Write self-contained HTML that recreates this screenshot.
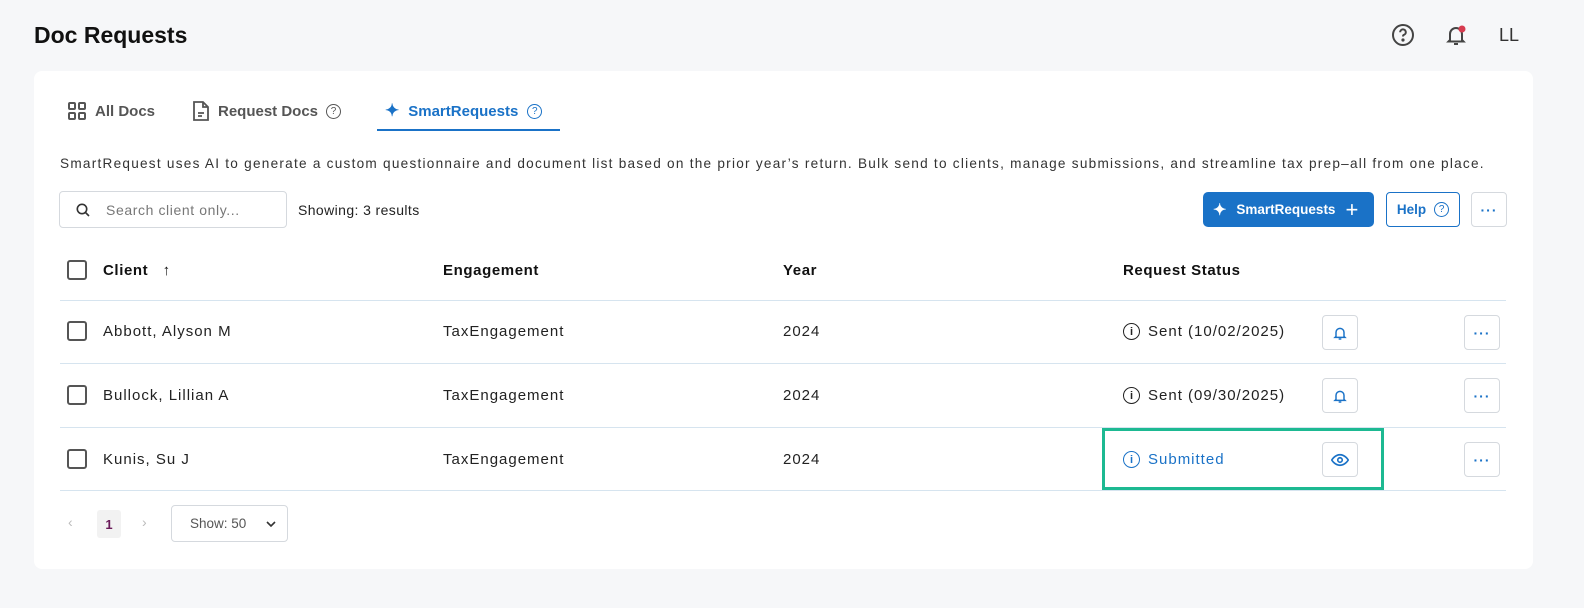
<!DOCTYPE html>
<html><head><style>
*{box-sizing:border-box;margin:0;padding:0}
body{width:1584px;height:608px;background:#f6f7f9;font-family:"Liberation Sans",sans-serif;color:#1f2328;position:relative;overflow:hidden}
.a{position:absolute}
.title{left:34px;top:22px;font-size:23px;font-weight:bold;color:#111}
.card{left:34px;top:71px;width:1499px;height:498px;background:#fff;border-radius:8px}
.tab{top:101px;font-size:15px;font-weight:bold;color:#555;display:flex;align-items:center;gap:8px}
.btn{border:1px solid #d5d9de;border-radius:4px;background:#fff;display:flex;align-items:center;justify-content:center}
.line{left:60px;width:1446px;height:1px;background:#d6e4ef}
.cb{width:20px;height:20px;border:2px solid #555;border-radius:3px;left:67px}
.t{font-size:15px;color:#222;letter-spacing:1px}
.h{font-size:15px;font-weight:bold;color:#111;letter-spacing:.6px}
.dots{color:#1a72c7;font-weight:bold;font-size:14px;letter-spacing:1px}
</style></head><body>
<div class="a title">Doc Requests</div>
<svg class="a" style="left:1391px;top:23px" width="24" height="24" viewBox="0 0 24 24" fill="none" stroke="#444" stroke-width="2"><circle cx="12" cy="12" r="10"/><path d="M9.2 9.2a2.8 2.8 0 1 1 3.6 2.7c-.6.3-.8.8-.8 1.6"/><circle cx="12" cy="17" r=".6" fill="#444"/></svg>
<svg class="a" style="left:1444px;top:23px" width="24" height="24" viewBox="0 0 24 24" fill="none" stroke="#444" stroke-width="2"><path d="M6 17V11a6 6 0 0 1 12 0v6l1.5 1.5h-15z"/><path d="M10 21h4"/><circle cx="18" cy="6" r="3.5" fill="#d63b4f" stroke="none"/></svg>
<div class="a" style="left:1499px;top:25px;font-size:18px;color:#333">LL</div>
<div class="a card"></div>
<div class="a tab" style="left:67px"><svg width="20" height="20" viewBox="0 0 20 20" fill="none" stroke="#555" stroke-width="2"><rect x="2" y="2" width="6" height="6" rx="1"/><rect x="12" y="2" width="6" height="6" rx="1"/><rect x="2" y="12" width="6" height="6" rx="1"/><rect x="12" y="12" width="6" height="6" rx="1"/></svg>All Docs</div>
<div class="a tab" style="left:192px"><svg width="18" height="20" viewBox="0 0 18 20" fill="none" stroke="#555" stroke-width="1.8"><path d="M2 1h9l5 5v13H2z"/><path d="M11 1v5h5M6 12h6M6 15h4"/></svg>Request Docs <span style="font-weight:normal;border:1.5px solid #555;border-radius:50%;width:15px;height:15px;font-size:10px;display:inline-flex;align-items:center;justify-content:center">?</span></div>
<div class="a tab" style="left:385px;color:#1a72c7;gap:9px"><span style="font-size:17px">✦</span>SmartRequests <span style="font-weight:normal;border:1.5px solid #1a72c7;border-radius:50%;width:15px;height:15px;font-size:10px;display:inline-flex;align-items:center;justify-content:center">?</span></div>
<div class="a" style="left:377px;top:129px;width:183px;height:2px;background:#1a72c7"></div>
<div class="a" style="left:60px;top:156px;font-size:13.6px;color:#333;letter-spacing:1.25px;white-space:nowrap">SmartRequest uses AI to generate a custom questionnaire and document list based on the prior year’s return. Bulk send to clients, manage submissions, and streamline tax prep–all from one place.</div>
<div class="a btn" style="left:59px;top:191px;width:228px;height:37px;justify-content:flex-start;padding-left:16px;gap:16px;font-size:14px;color:#777;letter-spacing:.6px"><svg width="14" height="14" viewBox="0 0 14 14" fill="none" stroke="#333" stroke-width="1.6"><circle cx="6" cy="6" r="4.7"/><path d="M9.5 9.5l3.5 3.5"/></svg>Search client only...</div>
<div class="a" style="left:298px;top:202px;font-size:14px;color:#222;letter-spacing:.4px">Showing: 3 results</div>
<div class="a" style="left:1203px;top:192px;width:171px;height:35px;background:#1a72c7;border-radius:5px;color:#fff;font-weight:bold;font-size:13.5px;display:flex;align-items:center;padding-left:10px;gap:10px"><span style="font-size:16px">✦</span>SmartRequests <span style="font-size:22px;font-weight:normal">+</span></div>
<div class="a btn" style="left:1386px;top:192px;width:74px;height:35px;border-color:#1a72c7;color:#1a72c7;font-weight:bold;font-size:13.5px;gap:8px">Help <span style="font-weight:normal;border:1.5px solid #1a72c7;border-radius:50%;width:15px;height:15px;font-size:10px;display:inline-flex;align-items:center;justify-content:center">?</span></div>
<div class="a btn dots" style="left:1471px;top:192px;width:36px;height:35px">···</div>
<div class="a cb" style="top:260px"></div>
<div class="a h" style="left:103px;top:262px">Client &nbsp; ↑</div>
<div class="a h" style="left:443px;top:262px">Engagement</div>
<div class="a h" style="left:783px;top:262px">Year</div>
<div class="a h" style="left:1123px;top:262px">Request Status</div>
<div class="a line" style="top:300px"></div>
<div class="a line" style="top:363px"></div>
<div class="a line" style="top:427px"></div>
<div class="a line" style="top:490px"></div>

<div class="a cb" style="top:321px"></div><div class="a t" style="left:103px;top:323px">Abbott, Alyson M</div><div class="a t" style="left:443px;top:323px">TaxEngagement</div><div class="a t" style="left:783px;top:323px">2024</div>
<div class="a t" style="left:1123px;top:323px;display:flex;gap:8px;align-items:center"><span style="border:1.6px solid #222;border-radius:50%;width:17px;height:17px;font-size:11px;font-weight:bold;display:inline-flex;align-items:center;justify-content:center;letter-spacing:0">i</span>Sent (10/02/2025)</div>
<div class="a btn" style="left:1322px;top:315px;width:36px;height:35px"><svg width="16" height="16" viewBox="0 0 24 24" fill="none" stroke="#1a72c7" stroke-width="2.2"><path d="M6 17V11a6 6 0 0 1 12 0v6l1.5 1.5h-15z"/><path d="M10 21h4"/></svg></div>
<div class="a btn dots" style="left:1464px;top:315px;width:36px;height:35px">···</div>

<div class="a cb" style="top:385px"></div><div class="a t" style="left:103px;top:387px">Bullock, Lillian A</div><div class="a t" style="left:443px;top:387px">TaxEngagement</div><div class="a t" style="left:783px;top:387px">2024</div>
<div class="a t" style="left:1123px;top:387px;display:flex;gap:8px;align-items:center"><span style="border:1.6px solid #222;border-radius:50%;width:17px;height:17px;font-size:11px;font-weight:bold;display:inline-flex;align-items:center;justify-content:center;letter-spacing:0">i</span>Sent (09/30/2025)</div>
<div class="a btn" style="left:1322px;top:378px;width:36px;height:35px"><svg width="16" height="16" viewBox="0 0 24 24" fill="none" stroke="#1a72c7" stroke-width="2.2"><path d="M6 17V11a6 6 0 0 1 12 0v6l1.5 1.5h-15z"/><path d="M10 21h4"/></svg></div>
<div class="a btn dots" style="left:1464px;top:378px;width:36px;height:35px">···</div>

<div class="a cb" style="top:449px"></div><div class="a t" style="left:103px;top:451px">Kunis, Su J</div><div class="a t" style="left:443px;top:451px">TaxEngagement</div><div class="a t" style="left:783px;top:451px">2024</div>
<div class="a t" style="left:1123px;top:451px;display:flex;gap:8px;align-items:center;color:#1a72c7"><span style="border:1.6px solid #1a72c7;border-radius:50%;width:17px;height:17px;font-size:11px;font-weight:bold;display:inline-flex;align-items:center;justify-content:center;letter-spacing:0">i</span>Submitted</div>
<div class="a btn" style="left:1322px;top:442px;width:36px;height:35px"><svg width="18" height="14" viewBox="0 0 24 18" fill="none" stroke="#1a72c7" stroke-width="2.2"><path d="M1 9s4-7 11-7 11 7 11 7-4 7-11 7S1 9 1 9z"/><circle cx="12" cy="9" r="3"/></svg></div>
<div class="a btn dots" style="left:1464px;top:442px;width:36px;height:35px">···</div>
<div class="a" style="left:1102px;top:428px;width:282px;height:62px;border:3px solid #1db992"></div>

<div class="a" style="left:68px;top:514px;color:#bbb;font-size:14px">‹</div>
<div class="a" style="left:97px;top:510px;width:24px;height:28px;background:#f2f2f2;border-radius:3px;color:#6a1b5a;font-weight:bold;font-size:13px;display:flex;align-items:center;justify-content:center">1</div>
<div class="a" style="left:142px;top:514px;color:#bbb;font-size:14px">›</div>
<div class="a btn" style="left:171px;top:505px;width:117px;height:37px;font-size:13.5px;color:#555;justify-content:flex-start;padding-left:18px">Show: 50<svg style="margin-left:20px" width="10" height="6" viewBox="0 0 10 6" fill="none" stroke="#333" stroke-width="1.6"><path d="M1 1l4 4 4-4"/></svg></div>
</body></html>
